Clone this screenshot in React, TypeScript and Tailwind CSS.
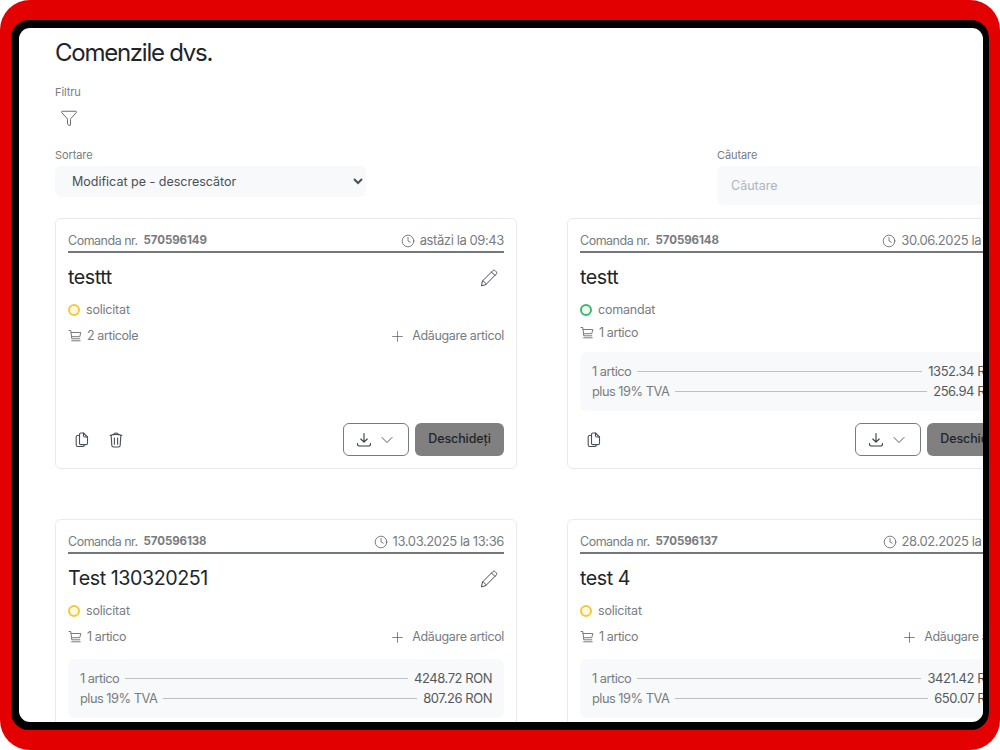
import { ChevronDown, Clock, Funnel, Plus } from "lucide-react";

type Summary = { items: string; itemsValue: string; vat: string };

type Order = {
  number: string;
  date: string;
  title: string;
  status: "solicitat" | "comandat";
  count: string;
  canAdd: boolean;
  canDelete: boolean;
  summary?: Summary;
};

const orders: Order[] = [
  { number: "570596149", date: "astăzi la 09:43", title: "testtt", status: "solicitat", count: "2 articole", canAdd: true, canDelete: true },
  {
    number: "570596148",
    date: "30.06.2025 la 10:48",
    title: "testt",
    status: "comandat",
    count: "1 artico",
    canAdd: false,
    canDelete: false,
    summary: { items: "1 artico", itemsValue: "1352.34 RON", vat: "256.94 RON" },
  },
  {
    number: "570596138",
    date: "13.03.2025 la 13:36",
    title: "Test 130320251",
    status: "solicitat",
    count: "1 artico",
    canAdd: true,
    canDelete: true,
    summary: { items: "1 artico", itemsValue: "4248.72 RON", vat: "807.26 RON" },
  },
  {
    number: "570596137",
    date: "28.02.2025 la 10:36",
    title: "test 4",
    status: "solicitat",
    count: "1 artico",
    canAdd: true,
    canDelete: true,
    summary: { items: "1 artico", itemsValue: "3421.42 RON", vat: "650.07 RON" },
  },
];

function CartIcon() {
  return (
    <svg width="14" height="14" viewBox="0 0 14 14" fill="none" stroke="#777c81" strokeWidth="1" strokeLinejoin="round" strokeLinecap="round">
      <path d="M1 1.500h1.800l1 8.300h8" />
      <path d="M3 3.500h9.800l-1 4.200H3.500" />
      <path d="M3.600 11.800h8.600" />
    </svg>
  );
}

function PencilIcon() {
  return (
    <svg width="18" height="18" viewBox="0 0 18 18" fill="none" stroke="#495057" strokeWidth="1" strokeLinejoin="round" strokeLinecap="round">
      <path d="M1.500 16.500l1-4.500L12.800 1.700c.7-.7 1.700-.7 2.400 0l1 1c.7.700.7 1.700 0 2.400L6 15.400z" />
      <path d="M2.500 12c1.500 0 3.500 2 3.500 3.400" />
      <path d="M11.500 3l3.500 3.500" />
    </svg>
  );
}

function FilesIcon() {
  return (
    <svg width="16" height="16" viewBox="0 0 16 16" fill="none" stroke="#495057" strokeWidth="1.1" strokeLinejoin="round" strokeLinecap="round">
      <path d="M5.500 3.500H3.600c-.8 0-1.400.6-1.400 1.400v8.200c0 .8.600 1.400 1.400 1.400h5.200c.8 0 1.300-.5 1.400-1.200" />
      <path d="M5.500 2.400c0-.8.600-1.400 1.400-1.400h2.600l4 4v6.200c0 .8-.6 1.400-1.400 1.400H6.900c-.8 0-1.400-.6-1.400-1.400z" />
      <path d="M9.500 1v2.800c0 .7.500 1.200 1.200 1.200h2.800" />
    </svg>
  );
}

function BinIcon() {
  return (
    <svg width="16" height="16" viewBox="0 0 16 16" fill="none" stroke="#495057" strokeWidth="1.1" strokeLinejoin="round" strokeLinecap="round">
      <path d="M2 3.400c1.500-.6 3.500-1 6-1s4.500.4 6 1" />
      <path d="M5.800 2.600c0-1 .8-1.600 2.200-1.600s2.200.6 2.200 1.600" />
      <path d="M3.200 3.600l.6 9.800c.1.900.7 1.600 1.700 1.600h5c1 0 1.600-.7 1.700-1.600l.6-9.800" />
      <path d="M6.400 6v6.200M9.600 6v6.200" />
    </svg>
  );
}

function DownloadIcon() {
  return (
    <svg width="16" height="16" viewBox="0 0 16 16" fill="none" stroke="#343a40" strokeWidth="1.1" strokeLinejoin="round" strokeLinecap="round">
      <path d="M8 1.500v8.500M4.800 7l3.200 3.200L11.200 7" />
      <path d="M1.500 11.500v.8c0 1 .8 1.700 1.700 1.700h9.600c1 0 1.700-.7 1.700-1.700v-.8" />
    </svg>
  );
}

function SummaryRow({ label, value }: { label: string; value: string }) {
  return (
    <div className="flex items-center gap-[6px] h-[20px] whitespace-nowrap">
      <span className="tracking-[-0.5px]">{label}</span>
      <span className="flex-1 h-px bg-[#bcc0c4]" />
      <span className="text-[13px] tracking-[-0.45px] text-[#55595e]">{value}</span>
    </div>
  );
}

function OrderCard({ order }: { order: Order }) {
  const ringColor = order.status === "comandat" ? "border-[#3fb573] bg-[#eef9f2]" : "border-[#f0c93c] bg-[#fdf8e3]";
  return (
    <div className="flex flex-col w-[462px] border border-[#e9ecef] rounded-md px-[12px] pt-[12px] pb-[12px] shadow-[0_0_2px_rgba(0,0,0,0.04)]">
      <div className="flex items-center justify-between h-[20px] border-b-2 border-[#75787b] box-content text-[#777c81] whitespace-nowrap">
        <div className="flex items-center gap-[6px]">
          <span className="text-[12.5px] tracking-[-0.5px]">Comanda nr.</span>
          <span className="font-bold text-[11.5px] tracking-[-0.1px]">{order.number}</span>
        </div>
        <div className="flex items-center gap-[5px]">
          <Clock size={14} strokeWidth={1.3} color="#55595e" />
          <span className="text-[13px] tracking-[-0.4px]">{order.date}</span>
        </div>
      </div>

      <div className="flex items-center justify-between h-[32px] mt-[9px] pr-[6px]">
        <h3 className="text-[19.7px] tracking-[-0.45px] text-[#212529]">{order.title}</h3>
        {order.status !== "comandat" && <PencilIcon />}
      </div>

      <div className="flex items-center gap-[6px] h-[18px] mt-[7px] text-[12.5px] text-[#777c81] tracking-[-0.2px]">
        <span className={"w-[12px] h-[12px] rounded-full border-2 " + ringColor} />
        <span>{order.status}</span>
      </div>

      <div className={"flex items-center justify-between text-[12.5px] text-[#777c81] tracking-[-0.4px] mt-[5px] " + (order.canAdd ? "h-[24px]" : "h-[18px]")}>
        <div className="flex items-center gap-[5px]">
          <CartIcon />
          <span>{order.count}</span>
        </div>
        {order.canAdd && (
          <div className="flex items-center gap-[6px]">
            <Plus size={17} strokeWidth={1} color="#55595e" />
            <span className="tracking-[-0.35px]">Adăugare articol</span>
          </div>
        )}
      </div>

      {order.summary && (
        <div className="bg-[#f8f9fa] rounded-md px-[12px] py-[9.5px] mt-[10px] text-[12.8px] text-[#777c81]">
          <SummaryRow label={order.summary.items} value={order.summary.itemsValue} />
          <SummaryRow label="plus 19% TVA" value={order.summary.vat} />
        </div>
      )}

      <div className="flex items-center justify-between mt-auto pt-[12px]">
        <div className="flex items-center gap-[18px] pl-[6px]">
          <FilesIcon />
          {order.canDelete && <BinIcon />}
        </div>
        <div className="flex items-center gap-[6px]">
          <button className="flex items-center justify-center gap-[5px] w-[66px] h-[33px] border border-[#777c81] rounded-md bg-white">
            <DownloadIcon />
            <ChevronDown size={20} strokeWidth={1} color="#343a40" />
          </button>
          <button className="w-[89px] h-[33px] rounded-md bg-[#808080] text-[12.5px] font-medium tracking-[-0.1px] text-[#212529]">
            Deschideți
          </button>
        </div>
      </div>
    </div>
  );
}

export default function App() {
  return (
    <div className="w-[1000px] h-[750px] bg-white overflow-hidden font-['Inter',sans-serif]">
      <div className="h-full bg-[#e30000] rounded-[30px] pt-[20px] pb-[20px] pl-[11px] pr-[11px]">
        <div className="h-full bg-black rounded-[18px] pt-[8px] pb-[8px] pl-[8px] pr-[6px]">
          <div className="h-full bg-white rounded-[11px] overflow-hidden pl-[36px] pt-[10px]">
            <h1 className="text-[24px] leading-[30px] tracking-[-1.25px] text-[#212529]">Comenzile dvs.</h1>

            <div className="mt-[17px] text-[11px] leading-[14px] text-[#777c81] tracking-[-0.1px]">Filtru</div>
            <div className="h-[30px] mt-[4px] pl-[5px] flex items-center">
              <Funnel size={18} strokeWidth={1} color="#343a40" />
            </div>

            <div className="flex items-start mt-[15px]">
              <div className="w-[311px] shrink-0">
                <div className="text-[11px] leading-[14px] text-[#777c81] tracking-[-0.1px] mb-[4px]">Sortare</div>
                <select className="w-full h-[31px] bg-[#f8f9fa] rounded-md pl-[13px] pr-[3px] text-[12.5px] text-[#495057] outline-none">
                  <option>Modificat pe - descrescător</option>
                </select>
              </div>
              <div className="ml-[351px] w-[400px] shrink-0">
                <div className="text-[11px] leading-[14px] text-[#777c81] tracking-[-0.1px] mb-[4px]">Căutare</div>
                <input
                  placeholder="Căutare"
                  className="w-full h-[39px] bg-[#f8f9fa] rounded-md px-[14px] text-[12.5px] placeholder:text-[#adb5bd] outline-none"
                />
              </div>
            </div>

            <div className="grid grid-cols-[462px_462px] gap-[50px] mt-[13px]">
              {orders.map((order) => (
                <OrderCard key={order.number} order={order} />
              ))}
            </div>
          </div>
        </div>
      </div>
    </div>
  );
}
